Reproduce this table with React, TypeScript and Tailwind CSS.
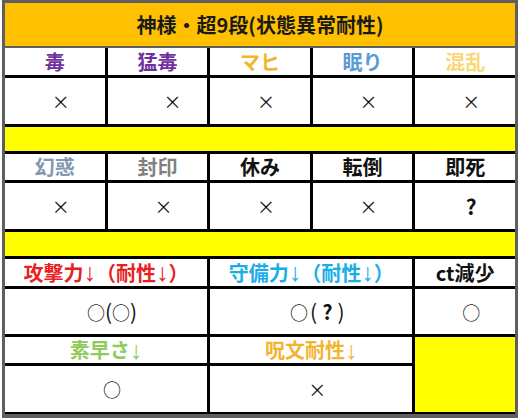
import React from "react";

const FONT = { fontFamily: '"Noto Sans CJK JP", "Noto Sans", sans-serif' };

const Head = ({ children, className = "" }: { children: React.ReactNode; className?: string }) => (
  <div className={`flex items-center justify-center bg-white text-[20px] font-bold leading-none ${className}`}>
    {children}
  </div>
);

const Val = ({ children, className = "" }: { children: React.ReactNode; className?: string }) => (
  <div className={`flex items-center justify-center bg-white pl-3 text-[18px] leading-none text-[#111] ${className}`}>
    {children}
  </div>
);

// thin narrow arrow like the sheet's font
const Down = () => (
  <span className="text-[25px] font-normal leading-none" style={{ fontFamily: '"Liberation Sans", sans-serif' }}>
    ↓
  </span>
);

const Band = () => <div className="col-span-5 bg-[#FFFF00]" />;

const App = () => {
  return (
    <div className="h-[418px] w-[519px] bg-white pl-[2px]" style={FONT}>
      <div className="flex h-full w-[516px] flex-col border-[3px] border-b-4 border-[#5f5f5f]">
        <div className="flex h-[45px] items-center justify-center border-b-2 border-[#5f5f5f] bg-[#FFC000] text-[20px] font-bold text-[#1a1a1a]">
          神様・超9段(状態異常耐性)
        </div>
        <div className="grid flex-1 grid-cols-5 grid-rows-[27px_46px_24px_26px_46px_24px_27px_45px_26px_46px] gap-[3px] bg-black">
          <Head className="text-[#7030A0]">毒</Head>
          <Head className="text-[#7030A0]">猛毒</Head>
          <Head className="text-[#F2B530]">マヒ</Head>
          <Head className="text-[#5B9BD5]">眠り</Head>
          <Head className="text-[#F9D878]">混乱</Head>

          <Val>×</Val>
          <Val className="pl-[30px]">×</Val>
          <Val>×</Val>
          <Val>×</Val>
          <Val>×</Val>

          <Band />

          <Head className="text-[#8497B0]">幻惑</Head>
          <Head className="text-[#808080]">封印</Head>
          <Head className="text-[#111]">休み</Head>
          <Head className="text-[#111]">転倒</Head>
          <Head className="text-[#111]">即死</Head>

          <Val>×</Val>
          <Val>×</Val>
          <Val>×</Val>
          <Val>×</Val>
          <Val className="text-[21px] font-bold">?</Val>

          <Band />

          <Head className="col-span-2 text-[#E8201E]">
            攻撃力<Down />（耐性<Down />）
          </Head>
          <Head className="col-span-2 text-[#1AAEE8]">
            守備力<Down />（耐性<Down />）
          </Head>
          <Head className="text-[#111]">ct減少</Head>

          <Val className="col-span-2 pl-1">
            ○<span className="text-[21px]">(</span>○<span className="text-[21px]">)</span>
          </Val>
          <Val className="col-span-2 pl-1">
            ○<span className="ml-[2px] text-[21px]">(</span>
            <span className="mx-[5px] text-[20px] font-bold">?</span>
            <span className="text-[21px]">)</span>
          </Val>
          <Val className="pl-2">○</Val>

          <Head className="col-span-2 text-[#8FCB5A]">
            素早さ<Down />
          </Head>
          <Head className="col-span-2 text-[#F2B530]">
            呪文耐性<Down />
          </Head>
          <div className="row-span-2 bg-[#FFFF00]" />

          <Val className="col-span-2">○</Val>
          <Val className="col-span-2">×</Val>
        </div>
      </div>
    </div>
  );
};

export default App;
